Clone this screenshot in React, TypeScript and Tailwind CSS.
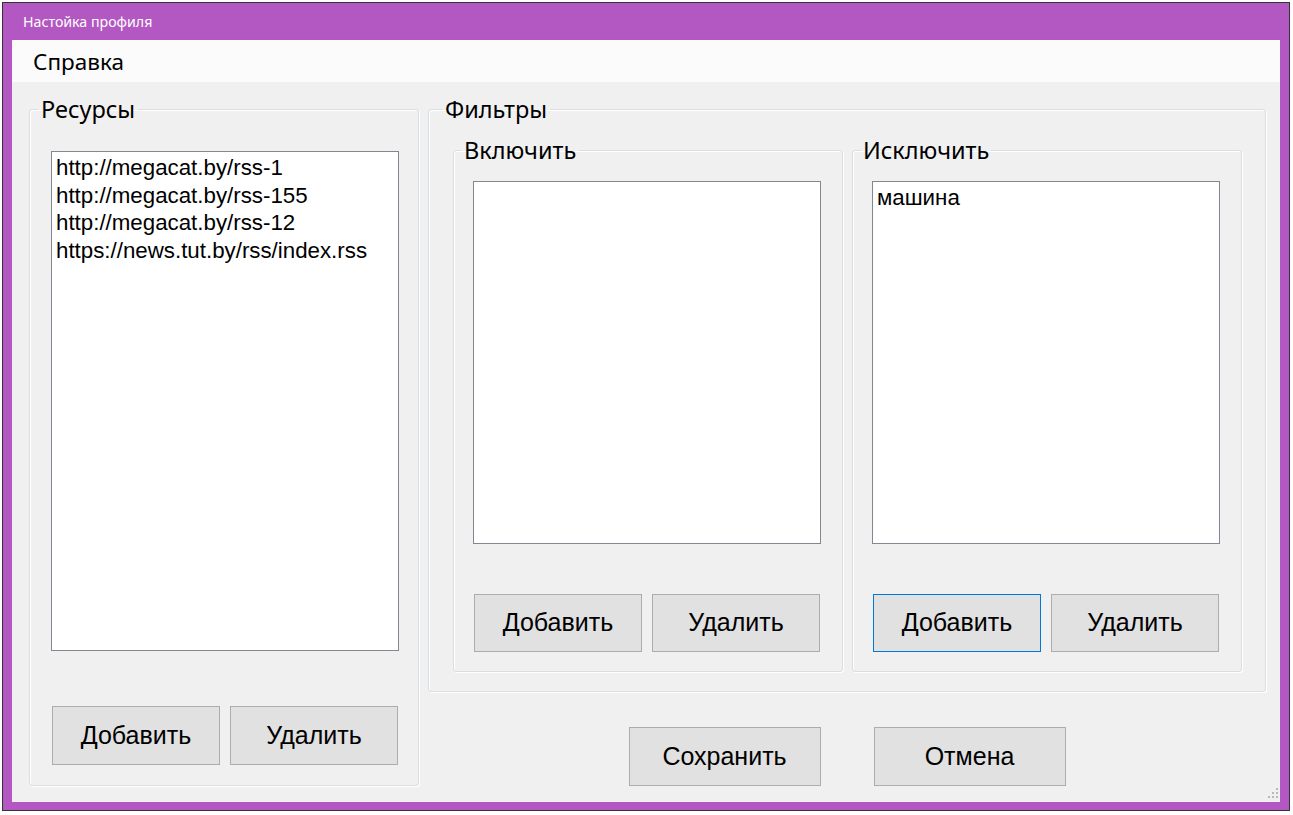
import * as React from "react"

const resources = [
  "http://megacat.by/rss-1",
  "http://megacat.by/rss-155",
  "http://megacat.by/rss-12",
  "https://news.tut.by/rss/index.rss",
]

function ListBox({ items, className = "" }: { items: string[]; className?: string }) {
  return (
    <div
      className={`border border-[#828790] bg-white pl-[4px] pt-[2px] font-['Liberation_Sans',Arial,sans-serif] text-[22.3px] leading-[27.7px] text-black ${className}`}
    >
      {items.map((item) => (
        <div key={item} className="whitespace-nowrap">
          {item}
        </div>
      ))}
    </div>
  )
}

function Btn({
  children,
  focused = false,
  className = "",
}: {
  children: React.ReactNode
  focused?: boolean
  className?: string
}) {
  return (
    <button
      className={`flex items-center justify-center border bg-[#e1e1e1] font-['Liberation_Sans',Arial,sans-serif] text-[25px] text-black ${
        focused ? "border-[#0078d7]" : "border-[#adadad]"
      } ${className}`}
    >
      {children}
    </button>
  )
}

function Group({
  title,
  legendClass,
  className = "",
  children,
}: {
  title: string
  legendClass: string
  className?: string
  children: React.ReactNode
}) {
  return (
    <fieldset
      className={`rounded-[3px] border border-[#d9dee3] shadow-[1px_1px_0_#ffffff,inset_1px_1px_0_#ffffff] ${className}`}
    >
      <legend className={`h-[28px] text-[23.5px] leading-[28px] text-black ${legendClass}`}>{title}</legend>
      {children}
    </fieldset>
  )
}

function FilterGroup({ title, items, focused }: { title: string; items: string[]; focused?: boolean }) {
  return (
    <Group title={title} legendClass="ml-[8px] px-[2px]" className="w-[390px]">
      <div className="pb-[19px]">
        <ListBox items={items} className="ml-[19px] mt-[17px] h-[363px] w-[348px]" />
        <div className="ml-[20px] mt-[50px] flex gap-[10px]">
          <Btn focused={focused} className="h-[58px] w-[168px]">
            Добавить
          </Btn>
          <Btn className="h-[58px] w-[168px]">Удалить</Btn>
        </div>
      </div>
    </Group>
  )
}

export default function App() {
  return (
    <div className="min-h-[815px] w-[1293px] bg-white pl-[2px] pt-[2px] font-['Noto_Sans',sans-serif]">
      <div className="flex h-[809px] w-[1288px] flex-col border border-[#333333] bg-[#b357c3] px-[9px] pb-[8px]">
        {/* title bar */}
        <div className="flex h-[37px] shrink-0 items-center pl-[11px] text-[14.2px] text-white">Настойка профиля</div>

        <div className="flex flex-1 flex-col bg-[#f0f0f0]">
          {/* menu */}
          <div className="flex h-[42px] items-center bg-[#fbfbfb] pl-[21px] pt-[2px] text-[22.5px] text-black">
            Справка
          </div>

          <div className="relative flex flex-1 gap-[9px] pl-[17px] pt-[13px]">
            <Group title="Ресурсы" legendClass="ml-[8px] px-[3px]" className="w-[390px] self-start">
              <div className="pb-[20px]">
                <ListBox items={resources} className="ml-[21px] mt-[28px] h-[500px] w-[348px]" />
                <div className="ml-[22px] mt-[55px] flex gap-[10px]">
                  <Btn className="h-[59px] w-[168px]">Добавить</Btn>
                  <Btn className="h-[59px] w-[168px]">Удалить</Btn>
                </div>
              </div>
            </Group>

            <div className="flex w-[838px] flex-col">
              <Group title="Фильтры" legendClass="ml-[13px] px-[3px]" className="w-[838px]">
                <div className="flex gap-[9px] pb-[19px] pl-[24px] pr-[22px] pt-[13px]">
                  <FilterGroup title="Включить" items={[]} />
                  <FilterGroup title="Исключить" items={["машина"]} focused />
                </div>
              </Group>
              <div className="mt-[35px] flex justify-center gap-[53px]">
                <Btn className="h-[59px] w-[192px]">Сохранить</Btn>
                <Btn className="h-[59px] w-[192px]">Отмена</Btn>
              </div>
            </div>

            {/* size grip */}
            <svg className="absolute bottom-[3px] right-[1px]" width="12" height="12" viewBox="0 0 12 12">
              <g fill="#b8b8b8">
                <rect x="9" y="1" width="2" height="2" />
                <rect x="5" y="5" width="2" height="2" />
                <rect x="9" y="5" width="2" height="2" />
                <rect x="1" y="9" width="2" height="2" />
                <rect x="5" y="9" width="2" height="2" />
                <rect x="9" y="9" width="2" height="2" />
              </g>
            </svg>
          </div>
        </div>
      </div>
    </div>
  )
}
